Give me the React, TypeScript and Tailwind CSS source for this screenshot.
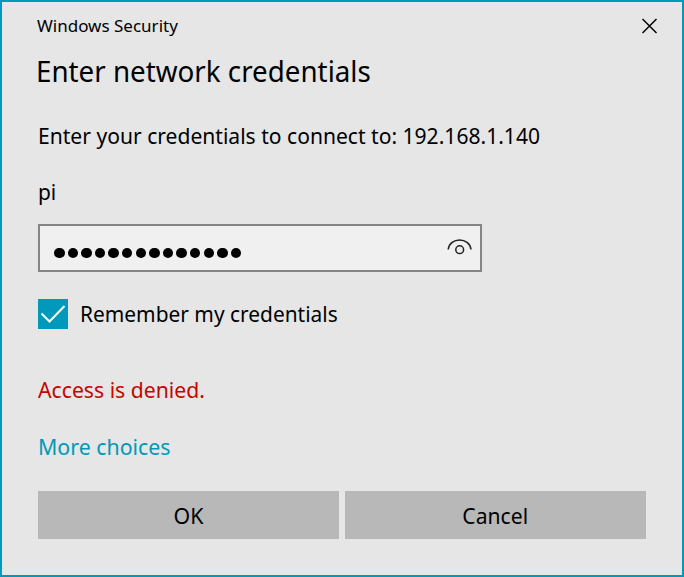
export default function App() {
  return (
    <main className="flex h-[577px] w-[684px] flex-col border-2 border-[#0099bc] bg-[#e6e6e6] pl-9 pr-9 font-['Noto_Sans',sans-serif] text-[22px] text-black">
      <header className="flex h-[48px] items-center justify-between text-[17px]">
        <span className="-ml-px origin-left">Windows Security</span>
        <button aria-label="Close" className="-mr-[12px]">
          <svg width="16" height="16" viewBox="0 0 16 16" fill="none" stroke="#000" strokeWidth="1.5"><path d="M.5 1 14.5 15M14.5 1 .5 15" /></svg>
        </button>
      </header>
      <h1 className="-ml-[2px] h-[42px] text-[29px] leading-[42px]"><span className="inline-block origin-left scale-x-[0.957]">Enter network credentials</span></h1>
      <p className="mt-[28px] h-[30px] leading-[30px]"><span className="inline-block origin-left whitespace-nowrap scale-x-[0.958]">Enter your credentials to connect to: 192.168.1.140</span></p>
      <p className="mt-[26px] h-[30px] leading-[30px]"><span className="inline-block origin-left scale-x-[0.95]">pi</span></p>
      <div className="mt-[18px] flex h-[48px] w-[444px] items-center justify-between border-2 border-[#858585] bg-[#f0f0f0] pl-[14px] pr-[8px]">
        <div className="mt-[10px] flex gap-[3.1px]">
          {Array.from({ length: 14 }, (_, i) => <i key={i} className="size-[10.5px] rounded-full bg-black" />)}
        </div>
        <svg width="25" height="18" viewBox="0 0 25 18" fill="none" stroke="#222" strokeWidth="1.5"><path d="M1.2 10.5C2.5 -2.2 22.7 -2.2 24 10.5" /><circle cx="12.7" cy="10.7" r="3.9" /></svg>
      </div>
      <label className="mt-[27px] flex h-[30px] items-center gap-3">
        <span className="flex size-[30px] items-center justify-center bg-[#0099bc]"><svg width="26" height="20" viewBox="0 0 26 20" fill="none" stroke="white" strokeWidth="2"><path d="m1.5 9.5 8 8L24.5 2" /></svg></span>
        <span className="-mt-[2px] origin-left scale-x-[0.95]">Remember my credentials</span>
      </label>
      <p className="mt-[45px] h-[30px] leading-[30px] text-[#c50500]"><span className="inline-block origin-left scale-x-[0.963]">Access is denied.</span></p>
      <a className="mt-[27px] h-[30px] leading-[30px] text-[#0099bc]"><span className="inline-block origin-left scale-x-[0.97]">More choices</span></a>
      <div className="mt-[30px] grid w-[608px] grid-cols-2 gap-[6px]">
        <button className="h-12 bg-[#b8b8b8]"><span className="inline-block scale-x-[0.97]">OK</span></button>
        <button className="h-12 bg-[#b8b8b8]"><span className="inline-block scale-x-[0.96]">Cancel</span></button>
      </div>
    </main>
  );
}
